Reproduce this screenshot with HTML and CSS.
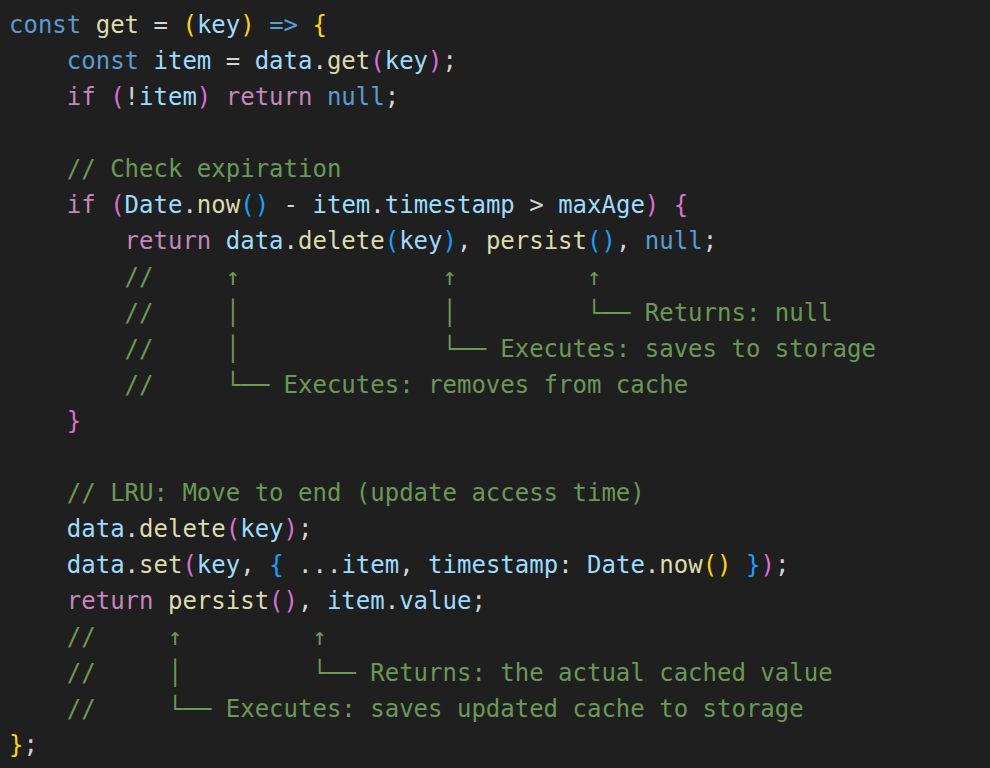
FILE: index.html
```html
<!DOCTYPE html>
<html lang="en">
<head>
<meta charset="utf-8">
<title>Code</title>
<link rel="stylesheet" href="styles.css">
</head>
<body>
<pre class="code"><span class="k">const</span> <span class="f">get</span> = <span class="b1">(</span><span class="v">key</span><span class="b1">)</span> <span class="k">=&gt;</span> <span class="b1">{</span>
    <span class="k">const</span> <span class="v">item</span> = <span class="v">data</span>.<span class="f">get</span><span class="b2">(</span><span class="v">key</span><span class="b2">)</span>;
    <span class="c">if</span> <span class="b2">(</span>!<span class="v">item</span><span class="b2">)</span> <span class="c">return</span> <span class="k">null</span>;

    <span class="m">// Check expiration</span>
    <span class="c">if</span> <span class="b2">(</span><span class="v">Date</span>.<span class="f">now</span><span class="b3">()</span> - <span class="v">item</span>.<span class="v">timestamp</span> &gt; <span class="v">maxAge</span><span class="b2">)</span> <span class="b2">{</span>
        <span class="c">return</span> <span class="v">data</span>.<span class="f">delete</span><span class="b3">(</span><span class="v">key</span><span class="b3">)</span>, <span class="f">persist</span><span class="b3">()</span>, <span class="k">null</span>;
        <span class="m">//     ↑              ↑         ↑</span>
        <span class="m">//     │              │         └── Returns: null</span>
        <span class="m">//     │              └── Executes: saves to storage</span>
        <span class="m">//     └── Executes: removes from cache</span>
    <span class="b2">}</span>

    <span class="m">// LRU: Move to end (update access time)</span>
    <span class="v">data</span>.<span class="f">delete</span><span class="b2">(</span><span class="v">key</span><span class="b2">)</span>;
    <span class="v">data</span>.<span class="f">set</span><span class="b2">(</span><span class="v">key</span>, <span class="b3">{</span> ...<span class="v">item</span>, <span class="v">timestamp</span>: <span class="v">Date</span>.<span class="f">now</span><span class="b1">()</span> <span class="b3">}</span><span class="b2">)</span>;
    <span class="c">return</span> <span class="f">persist</span><span class="b2">()</span>, <span class="v">item</span>.<span class="v">value</span>;
    <span class="m">//     ↑         ↑</span>
    <span class="m">//     │         └── Returns: the actual cached value</span>
    <span class="m">//     └── Executes: saves updated cache to storage</span>
<span class="b1">}</span>;</pre>
</body>
</html>
```

FILE: styles.css
```css
html, body {
  margin: 0;
  padding: 0;
  background: #1f1f1f;
}

.code {
  margin: 0;
  padding: 7px 0 0 9px;
  font-family: "DejaVu Sans Mono", "Liberation Mono", monospace;
  font-size: 24px;
  line-height: 36px;
  color: #d4d4d4;
  white-space: pre;
  height: 761px;
}

.k { color: #569cd6; }
.c { color: #c586c0; }
.f { color: #dcdcaa; }
.v { color: #9cdcfe; }
.m { color: #6a9955; }
.b1 { color: #ffd700; }
.b2 { color: #da70d6; }
.b3 { color: #179fff; }
```
